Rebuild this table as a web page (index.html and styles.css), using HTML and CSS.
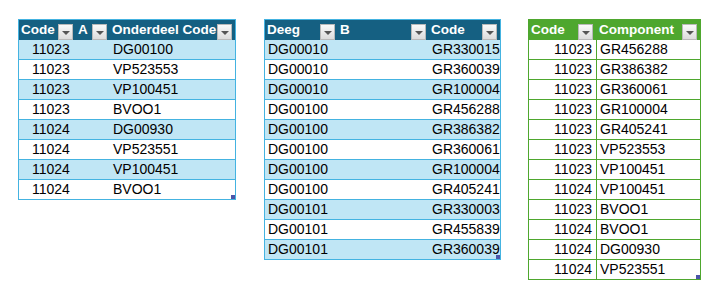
FILE: index.html
```html
<!DOCTYPE html>
<html>
<head>
<meta charset="utf-8">
<link rel="stylesheet" href="styles.css">
</head>
<body>
<div class="sheet">
  <div class="tbl blue t1">
    <div class="hc"><span>Code</span><i class="dd"></i></div>
    <div class="hc"><span>A</span><i class="dd"></i></div>
    <div class="hc"><span>Onderdeel Code</span><i class="dd"></i></div>

    <div class="c band ind">11023</div><div class="c band"></div><div class="c band">DG00100</div>
    <div class="c ind">11023</div><div class="c"></div><div class="c">VP523553</div>
    <div class="c band ind">11023</div><div class="c band"></div><div class="c band">VP100451</div>
    <div class="c ind">11023</div><div class="c"></div><div class="c">BVOO1</div>
    <div class="c band ind">11024</div><div class="c band"></div><div class="c band">DG00930</div>
    <div class="c ind">11024</div><div class="c"></div><div class="c">VP523551</div>
    <div class="c band ind">11024</div><div class="c band"></div><div class="c band">VP100451</div>
    <div class="c ind last">11024</div><div class="c last"></div><div class="c last">BVOO1</div>
    <b class="grip"></b>
  </div>

  <div class="tbl blue t2">
    <div class="hc"><span>Deeg</span><i class="dd"></i></div>
    <div class="hc"><span>B</span><i class="dd"></i></div>
    <div class="hc"><span>Code</span><i class="dd"></i></div>

    <div class="c band">DG00010</div><div class="c band"></div><div class="c band r">GR330015</div>
    <div class="c">DG00010</div><div class="c"></div><div class="c r">GR360039</div>
    <div class="c band">DG00010</div><div class="c band"></div><div class="c band r">GR100004</div>
    <div class="c">DG00100</div><div class="c"></div><div class="c r">GR456288</div>
    <div class="c band">DG00100</div><div class="c band"></div><div class="c band r">GR386382</div>
    <div class="c">DG00100</div><div class="c"></div><div class="c r">GR360061</div>
    <div class="c band">DG00100</div><div class="c band"></div><div class="c band r">GR100004</div>
    <div class="c">DG00100</div><div class="c"></div><div class="c r">GR405241</div>
    <div class="c band">DG00101</div><div class="c band"></div><div class="c band r">GR330003</div>
    <div class="c">DG00101</div><div class="c"></div><div class="c r">GR455839</div>
    <div class="c band last">DG00101</div><div class="c band last"></div><div class="c band r last">GR360039</div>
    <b class="grip"></b>
  </div>

  <div class="tbl green t3">
    <div class="hc"><span>Code</span><i class="dd"></i></div>
    <div class="hc"><span>Component</span><i class="dd"></i></div>

    <div class="c r">11023</div><div class="c">GR456288</div>
    <div class="c r">11023</div><div class="c">GR386382</div>
    <div class="c r">11023</div><div class="c">GR360061</div>
    <div class="c r">11023</div><div class="c">GR100004</div>
    <div class="c r">11023</div><div class="c">GR405241</div>
    <div class="c r">11023</div><div class="c">VP523553</div>
    <div class="c r">11023</div><div class="c">VP100451</div>
    <div class="c r">11024</div><div class="c">VP100451</div>
    <div class="c r">11023</div><div class="c">BVOO1</div>
    <div class="c r">11024</div><div class="c">BVOO1</div>
    <div class="c r">11024</div><div class="c">DG00930</div>
    <div class="c r last">11024</div><div class="c last">VP523551</div>
    <b class="grip"></b>
  </div>
</div>
</body>
</html>
```

FILE: styles.css
```css
html, body {
  margin: 0;
  padding: 0;
  background: #ffffff;
}

.sheet {
  display: flex;
  align-items: flex-start;
  padding: 19px 0 0 18px;
  font-family: "Liberation Sans", Arial, sans-serif;
}

.tbl {
  position: relative;
  display: grid;
  border: 1px solid;
}

.blue { border-color: #44b3e1; }
.green { border-color: #4ea72e; }

.t1 { grid-template-columns: 57px 34px 125px; }
.t2 { grid-template-columns: 73px 91px 71px; margin-left: 28px; }
.t3 { grid-template-columns: 68px 103px; margin-left: 27px; }

.hc {
  height: 20px;
  display: flex;
  align-items: flex-end;
  justify-content: space-between;
  padding: 0 3px 0 2px;
  color: #ffffff;
  font-weight: bold;
  font-size: 13.5px;
  box-sizing: border-box;
}

.hc span {
  align-self: center;
  line-height: 20px;
  white-space: nowrap;
}

.blue .hc { background: #156082; }
.green .hc { background: #4ea72e; }

.dd {
  flex: none;
  width: 13px;
  height: 14px;
  border: 1px solid #b9b9b9;
  background: linear-gradient(#fafafa, #dcdcdc);
  position: relative;
}

.dd::after {
  content: "";
  position: absolute;
  left: 3px;
  top: 6px;
  border-left: 4px solid transparent;
  border-right: 4px solid transparent;
  border-top: 4px solid #555555;
}

.c {
  height: 20px;
  box-sizing: border-box;
  font-size: 14px;
  line-height: 19px;
  color: #000000;
  padding: 0 3px;
  white-space: nowrap;
  background: #ffffff;
}

.blue .c { border-bottom: 1px solid #44b3e1; }
.blue .c.band { background: #c0e6f5; }
.blue .c.last { border-bottom: none; height: 19px; }

.green .c { border-bottom: 1px solid #4ea72e; }
.green .c.last { border-bottom: none; height: 19px; }
.green .c:nth-child(odd) { border-right: 1px solid #4ea72e; }
.green .hc:first-child { border-right: 1px solid #4ea72e; }

.ind { padding-left: 13px; }
.r { text-align: right; padding-right: 4px; }
.t2 .r { padding-right: 5px; }

.grip {
  position: absolute;
  right: 0;
  bottom: 0;
  width: 4px;
  height: 4px;
  background: #4b55a8;
}
```
